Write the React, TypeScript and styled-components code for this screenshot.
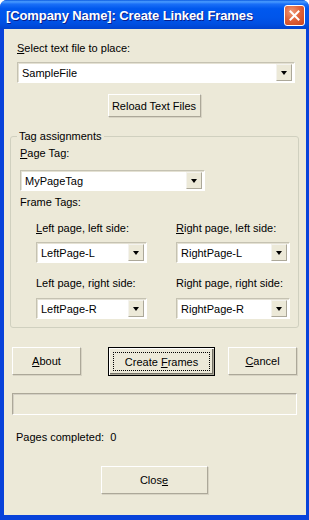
import React from "react";
import styled, { createGlobalStyle, css } from "styled-components";

const Global = createGlobalStyle`
  html, body { margin: 0; padding: 0; background: #ffffff; }
  body { font-family: "Liberation Sans", Arial, sans-serif; font-size: 11px; color: #000; }
`;

const Window = styled.div`
  width: 309px;
  height: 520px;
  display: flex;
  flex-direction: column;
  box-sizing: border-box;
  border-radius: 7px 7px 0 0;
  overflow: hidden;
  background: #0842da;
`;

const TitleBar = styled.div`
  height: 29px;
  flex: none;
  display: flex;
  align-items: center;
  justify-content: space-between;
  padding: 1px 4px 0 6px;
  box-sizing: border-box;
  background: linear-gradient(
    to bottom,
    #0a5ae0 0%,
    #4a9cff 6%,
    #1a6ff7 14%,
    #0058ee 30%,
    #0055ea 60%,
    #0050e3 80%,
    #0043cf 100%
  );
`;

const Title = styled.span`
  font-family: "Liberation Sans", Arial, sans-serif;
  font-weight: bold;
  font-size: 13px;
  color: #fff;
  text-shadow: 1px 1px #0a1d8a;
  letter-spacing: -0.1px;
`;

const CloseBox = styled.div`
  width: 21px;
  height: 21px;
  box-sizing: border-box;
  border: 1px solid #fff;
  border-radius: 3px;
  background: radial-gradient(circle at 35% 30%, #f09a78 0%, #e0643c 45%, #c8431c 100%);
  display: flex;
  align-items: center;
  justify-content: center;
`;

const Body = styled.div`
  flex: 1;
  margin: 0 3px 5px 4px;
  background: #ece9d8;
  display: flex;
  flex-direction: column;
  padding-top: 13px;
`;

const Label = styled.div<{ $ml?: number; $mt?: number }>`
  line-height: 13px;
  height: 13px;
  margin-left: ${(p) => p.$ml ?? 0}px;
  margin-top: ${(p) => p.$mt ?? 0}px;
  white-space: nowrap;
`;

const U = styled.span`
  text-decoration: underline;
`;

const ComboBox = styled.div<{ $w: number; $ml?: number; $mt?: number }>`
  width: ${(p) => p.$w}px;
  height: 21px;
  margin-left: ${(p) => p.$ml ?? 0}px;
  margin-top: ${(p) => p.$mt ?? 0}px;
  box-sizing: border-box;
  background: #fff;
  border: 1px solid;
  border-color: #c5c2b2 #ffffff #ffffff #c5c2b2;
  box-shadow: inset 1px 1px 0 #e4e1d3;
  display: flex;
  align-items: center;
  padding: 2px 2px 2px 4px;
  flex: none;
`;

const ComboText = styled.span`
  flex: 1;
  line-height: 13px;
  padding-top: 1px;
`;

const ArrowBtn = styled.div`
  width: 16px;
  height: 17px;
  box-sizing: border-box;
  background: #ece9d8;
  border: 1px solid;
  border-color: #f4f3ee #aca899 #aca899 #f4f3ee;
  display: flex;
  align-items: center;
  justify-content: center;
`;

const Arrow = styled.div`
  width: 0;
  height: 0;
  border-left: 3.5px solid transparent;
  border-right: 3.5px solid transparent;
  border-top: 4px solid #000;
  margin-top: 1px;
`;

const Button = styled.button<{ $w: number; $h: number; $default?: boolean; $ml?: number }>`
  width: ${(p) => p.$w}px;
  height: ${(p) => p.$h}px;
  margin-left: ${(p) => p.$ml ?? 0}px;
  box-sizing: border-box;
  font-family: "Liberation Sans", Arial, sans-serif;
  font-size: 11px;
  white-space: nowrap;
  color: #000;
  background: #ece9d8;
  border: 1px solid;
  border-color: #ffffff #aca899 #aca899 #ffffff;
  box-shadow: 1px 1px 0 #d8d4c4;
  padding: 0;
  display: flex;
  align-items: center;
  justify-content: center;
  flex: none;
  ${(p) =>
    p.$default &&
    css`
      border: 1px solid #000;
      box-shadow: inset 1px 1px 0 #fff, inset -1px -1px 0 #aca899, inset -2px -2px 0 #716f64;
    `}
`;

const FocusRect = styled.span`
  display: flex;
  align-items: center;
  justify-content: center;
  width: calc(100% - 8px);
  height: calc(100% - 8px);
  border: 1px dotted #000;
  box-sizing: border-box;
`;

const Center = styled.div<{ $mt: number }>`
  display: flex;
  justify-content: center;
  margin-top: ${(p) => p.$mt}px;
  padding-right: 2px;
`;

const Group = styled.fieldset`
  margin: 13px 0 0 6px;
  width: 289px;
  box-sizing: border-box;
  border: 1px solid #d0d0bf;
  border-radius: 3px;
  padding: 4px 0 8px 9px;
  display: flex;
  flex-direction: column;
  min-width: 0;
`;

const Legend = styled.legend`
  padding: 0 2px;
  margin-left: -3px;
  line-height: 13px;
  font-size: 11px;
`;

const FrameGrid = styled.div`
  display: grid;
  grid-template-columns: 111px 114px;
  column-gap: 29px;
  margin-left: 16px;
`;

const Cell = styled.div<{ $mt: number }>`
  display: flex;
  flex-direction: column;
  margin-top: ${(p) => p.$mt}px;
`;

const ButtonRow = styled.div`
  display: flex;
  margin: 19px 0 0 8px;
`;

const Progress = styled.div`
  width: 285px;
  height: 22px;
  margin: 17px 0 0 8px;
  box-sizing: border-box;
  border: 1px solid;
  border-color: #aca899 #ffffff #ffffff #aca899;
  box-shadow: inset 1px 1px 0 #d4d0c4;
  background: #ece9d8;
`;

const Combo = ({ w, ml, mt, value }: { w: number; ml?: number; mt?: number; value: string }) => (
  <ComboBox $w={w} $ml={ml} $mt={mt}>
    <ComboText>{value}</ComboText>
    <ArrowBtn>
      <Arrow />
    </ArrowBtn>
  </ComboBox>
);

export default function App() {
  return (
    <>
      <Global />
      <Window>
        <TitleBar>
          <Title>[Company Name]: Create Linked Frames</Title>
          <CloseBox>
            <svg width="11" height="11" viewBox="0 0 11 11">
              <path d="M1.5 1.5 L9.5 9.5 M9.5 1.5 L1.5 9.5" stroke="#fff" strokeWidth="2" strokeLinecap="square" />
            </svg>
          </CloseBox>
        </TitleBar>
        <Body>
          <Label $ml={13}>
            <U>S</U>elect text file to place:
          </Label>
          <Combo w={278} ml={13} mt={7} value="SampleFile" />
          <Center $mt={11}>
            <Button $w={93} $h={23}>Reload Text Files</Button>
          </Center>
          <Group>
            <Legend>Tag assignments</Legend>
            <Label>
              <U>P</U>age Tag:
            </Label>
            <Combo w={185} mt={10} value="MyPageTag" />
            <Label $mt={5}>Frame Tags:</Label>
            <FrameGrid>
              <Cell $mt={13}>
                <Label>
                  <U>L</U>eft page, left side:
                </Label>
                <Combo w={111} mt={7} value="LeftPage-L" />
              </Cell>
              <Cell $mt={13}>
                <Label>
                  <U>R</U>ight page, left side:
                </Label>
                <Combo w={114} mt={7} value="RightPage-L" />
              </Cell>
              <Cell $mt={14}>
                <Label>Left page, right side:</Label>
                <Combo w={111} mt={8} value="LeftPage-R" />
              </Cell>
              <Cell $mt={14}>
                <Label>Right page, right side:</Label>
                <Combo w={114} mt={8} value="RightPage-R" />
              </Cell>
            </FrameGrid>
          </Group>
          <ButtonRow>
            <Button $w={69} $h={28}>
              <U>A</U>bout
            </Button>
            <Button $w={107} $h={29} $ml={27} $default>
              <FocusRect>
                Create&nbsp;<U>F</U>rames
              </FocusRect>
            </Button>
            <Button $w={69} $h={28} $ml={13}>
              <U>C</U>ancel
            </Button>
          </ButtonRow>
          <Progress />
          <Label $ml={12} $mt={16}>Pages completed:&nbsp; 0</Label>
          <Center $mt={22}>
            <Button $w={107} $h={28}>
              Clos<U>e</U>
            </Button>
          </Center>
        </Body>
      </Window>
    </>
  );
}
